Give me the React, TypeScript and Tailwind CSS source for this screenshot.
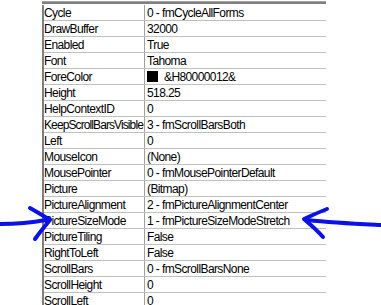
import type { ReactNode } from "react";

type Prop = { name: string; value: ReactNode; tight?: boolean };

const props: Prop[] = [
  { name: "Cycle", value: "0 - fmCycleAllForms" },
  { name: "DrawBuffer", value: "32000" },
  { name: "Enabled", value: "True" },
  { name: "Font", value: "Tahoma" },
  {
    name: "ForeColor",
    value: (
      <span className="flex items-center gap-[6px]">
        <span className="h-[11px] w-[11px] bg-black" />
        <span>&amp;H80000012&amp;</span>
      </span>
    ),
  },
  { name: "Height", value: "518.25" },
  { name: "HelpContextID", value: "0" },
  { name: "KeepScrollBarsVisible", value: "3 - fmScrollBarsBoth", tight: true },
  { name: "Left", value: "0" },
  { name: "MouseIcon", value: "(None)" },
  { name: "MousePointer", value: "0 - fmMousePointerDefault" },
  { name: "Picture", value: "(Bitmap)" },
  { name: "PictureAlignment", value: "2 - fmPictureAlignmentCenter" },
  { name: "PictureSizeMode", value: "1 - fmPictureSizeModeStretch" },
  { name: "PictureTiling", value: "False" },
  { name: "RightToLeft", value: "False" },
  { name: "ScrollBars", value: "0 - fmScrollBarsNone" },
  { name: "ScrollHeight", value: "0" },
  { name: "ScrollLeft", value: "0" },
];

function Row({ name, value, tight }: Prop) {
  return (
    <div className="flex h-[16px] border-b border-[#c0c0c0]">
      <div className="flex w-[101px] items-center overflow-hidden border-r border-[#a0a0a0]">
        {/* Tahoma is narrower than Arial, the longest name needs squeezing to fit */}
        <span className={tight ? "whitespace-nowrap tracking-[-0.9px]" : "whitespace-nowrap"}>
          {name}
        </span>
      </div>
      <div className="flex flex-1 items-center pl-[2px]">
        <span className="whitespace-nowrap">{value}</span>
      </div>
    </div>
  );
}

// hand drawn marker arrows sit on top of the grid
function Arrows() {
  return (
    <svg
      className="pointer-events-none absolute left-0 top-0"
      width="381"
      height="305"
      viewBox="0 0 381 305"
      fill="none"
      stroke="#0a12e8"
      strokeWidth="4"
      strokeLinecap="round"
      strokeLinejoin="round"
    >
      <path d="M0 224 C 15 224, 30 223, 46 220" />
      <path d="M30 208 C 37 212, 44 216, 50 220 C 45 226, 40 232, 35 239" />
      <path d="M381 225 C 360 224, 335 223, 307 220" />
      <path d="M327 209 C 319 212, 311 216, 304 219 C 311 225, 317 230, 323 237" />
    </svg>
  );
}

export default function App() {
  return (
    <div
      className="relative h-[305px] w-[381px] overflow-hidden bg-white text-[12px] leading-none tracking-[-0.6px] text-black"
      style={{ fontFamily: '"Liberation Sans", Arial, sans-serif' }}
    >
      <div className="ml-[42px] w-[284px]">
        <div className="h-[5px] pt-[1px]">
          <div className="h-[1px] bg-[#a0a0a0]" />
          <div className="h-[2px] bg-[#808080]" />
        </div>
        <div className="border-l-2 border-[#808080]">
          {props.map((p) => (
            <Row key={p.name} name={p.name} value={p.value} tight={p.tight} />
          ))}
        </div>
      </div>
      <Arrows />
    </div>
  );
}
